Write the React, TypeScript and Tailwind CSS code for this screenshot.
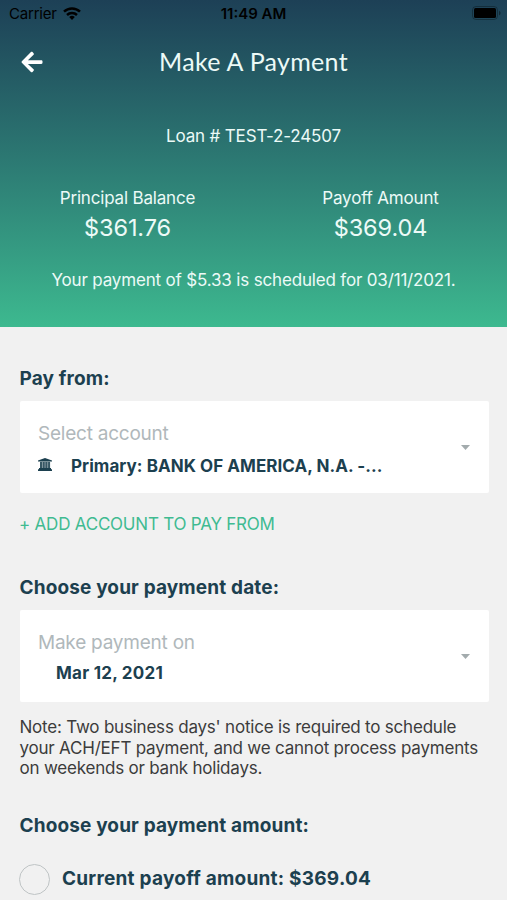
import React from 'react';
import { FaArrowLeft } from 'react-icons/fa';

function StatusBar() {
  return (
    <div className="relative flex h-7 items-center justify-between pl-[9px] pr-[6px] text-black">
      <div className="flex items-center gap-[6px]">
        <span className="text-[15px] leading-7 tracking-[-0.2px]">Carrier</span>
        <svg width="18" height="13" viewBox="0 0 18 13" fill="none" stroke="currentColor" strokeWidth="2.5" className="relative -top-px">
          <path d="M1 4.7a11.6 11.6 0 0 1 16 0" />
          <path d="M4 8a7.3 7.3 0 0 1 10 0" />
          <path d="M9 13 6.2 10.1a4 4 0 0 1 5.6 0Z" fill="currentColor" stroke="none" />
        </svg>
      </div>
      <span className="absolute inset-x-0 text-center text-[15px] font-semibold leading-7">11:49 AM</span>
      <svg width="29" height="14" viewBox="0 0 29 14" className="relative -top-px">
        <rect x="0.5" y="0.5" width="25" height="13" rx="3.5" fill="none" stroke="black" strokeOpacity="0.3" />
        <rect x="2" y="2" width="22" height="10" rx="1.5" fill="black" />
        <path d="M27 4.7v4.6c1-.4 1.5-1.3 1.5-2.3S28 5.1 27 4.7Z" fill="black" fillOpacity="0.4" />
      </svg>
    </div>
  );
}

function BankIcon() {
  return (
    <svg width="14" height="13" viewBox="0 0 14 13" fill="currentColor" className="relative -top-[2px] mr-[19px]">
      <path d="M7 0l7 2.6v1H0v-1Z" />
      <path d="M2 3.6h10v7H2z" fillOpacity="0.4" />
      <path d="M2 4h2v6H2zM4.7 4h2v6h-2zM7.4 4h2v6h-2zM10.1 4h2v6h-2z" fillOpacity="0.8" />
      <path d="M1 10h12v1.3h1V13H0v-1.7h1z" />
    </svg>
  );
}

function Balance({ label, amount }: { label: string; amount: string }) {
  return (
    <div className="flex-1 text-center">
      <div className="text-[17px] leading-6 tracking-[-0.18px]">{label}</div>
      <div className="mt-[2px] text-[23.5px] leading-8 tracking-[-0.1px]">{amount}</div>
    </div>
  );
}

function SelectCard({ label, children }: { label: string; children: React.ReactNode }) {
  return (
    <button className="mt-[10px] flex h-[92px] w-full items-center justify-between rounded-[2px] bg-white pl-[18px] pr-[19px] text-left">
      <div className="pt-[6px]">
        <div className="text-[19px] leading-7 tracking-[-0.23px] text-[#b0b8bb]">{label}</div>
        {children}
      </div>
      <svg width="9" height="5" viewBox="0 0 9 5" className="fill-[#a3abad]">
        <path d="M0 0h9L4.5 5Z" />
      </svg>
    </button>
  );
}

function Heading({ children }: { children: React.ReactNode }) {
  return <h2 className="-ml-[0.5px] text-[19px] font-bold leading-6 tracking-[0.14px]">{children}</h2>;
}

export default function App() {
  return (
    <div className="h-[900px] w-full overflow-hidden bg-[#f1f1f1] font-['Inter',sans-serif] text-[#1c404f]">
      <header className="h-[327px] bg-linear-to-b from-[#1d4056] to-[#3db98f] text-[#ecfaf7]">
        <StatusBar />
        <div className="relative flex h-[68px] items-center px-5">
          <FaArrowLeft className="text-[24px] text-white" />
          <h1 className="absolute inset-x-0 text-center font-['Lato',sans-serif] text-[25px] tracking-[0.3px]">Make A Payment</h1>
        </div>
        <div className="mt-7 text-center text-[17px] leading-6 tracking-[-0.16px]">Loan # TEST-2-24507</div>
        <div className="mt-[38px] flex pl-px">
          <Balance label="Principal Balance" amount="$361.76" />
          <Balance label="Payoff Amount" amount="$369.04" />
        </div>
        <p className="mt-[24px] text-center text-[17px] leading-6 tracking-[-0.17px]">Your payment of $5.33 is scheduled for 03/11/2021.</p>
      </header>

      <main className="pl-5 pr-[18px] pt-10">
        <Heading>Pay from:</Heading>
        <SelectCard label="Select account">
          <div className="mt-1 flex items-center text-[17px] font-bold leading-7 tracking-[0.05px]">
            <BankIcon />
            Primary: BANK OF AMERICA, N.A. -...
          </div>
        </SelectCard>
        <a className="-ml-px mt-[19px] block text-[17px] leading-6 tracking-[-0.22px] text-[#3fbb91]">+ ADD ACCOUNT TO PAY FROM</a>

        <div className="mt-10">
          <Heading>Choose your payment date:</Heading>
          <SelectCard label="Make payment on">
            <div className="pl-[18px] text-[17px] font-bold leading-8 tracking-[0.25px]">Mar 12, 2021</div>
          </SelectCard>
          <p className="-ml-[0.5px] mt-[15px] text-[17px] leading-[20.5px] tracking-[-0.21px] text-[#3c3c3c]">
            Note: Two business days' notice is required to schedule
            <br />
            your ACH/EFT payment, and we cannot process payments
            <br />
            on weekends or bank holidays.
          </p>
        </div>

        <div className="mt-[35px]">
          <Heading>Choose your payment amount:</Heading>
          <label className="-ml-px mt-[26px] flex items-center">
            <span className="size-[31px] rounded-full border-[1.5px] border-[#bfc4c5]" />
            <span className="ml-3 text-[19px] font-bold leading-6 tracking-[0.24px]">Current payoff amount: $369.04</span>
          </label>
        </div>
      </main>
    </div>
  );
}
